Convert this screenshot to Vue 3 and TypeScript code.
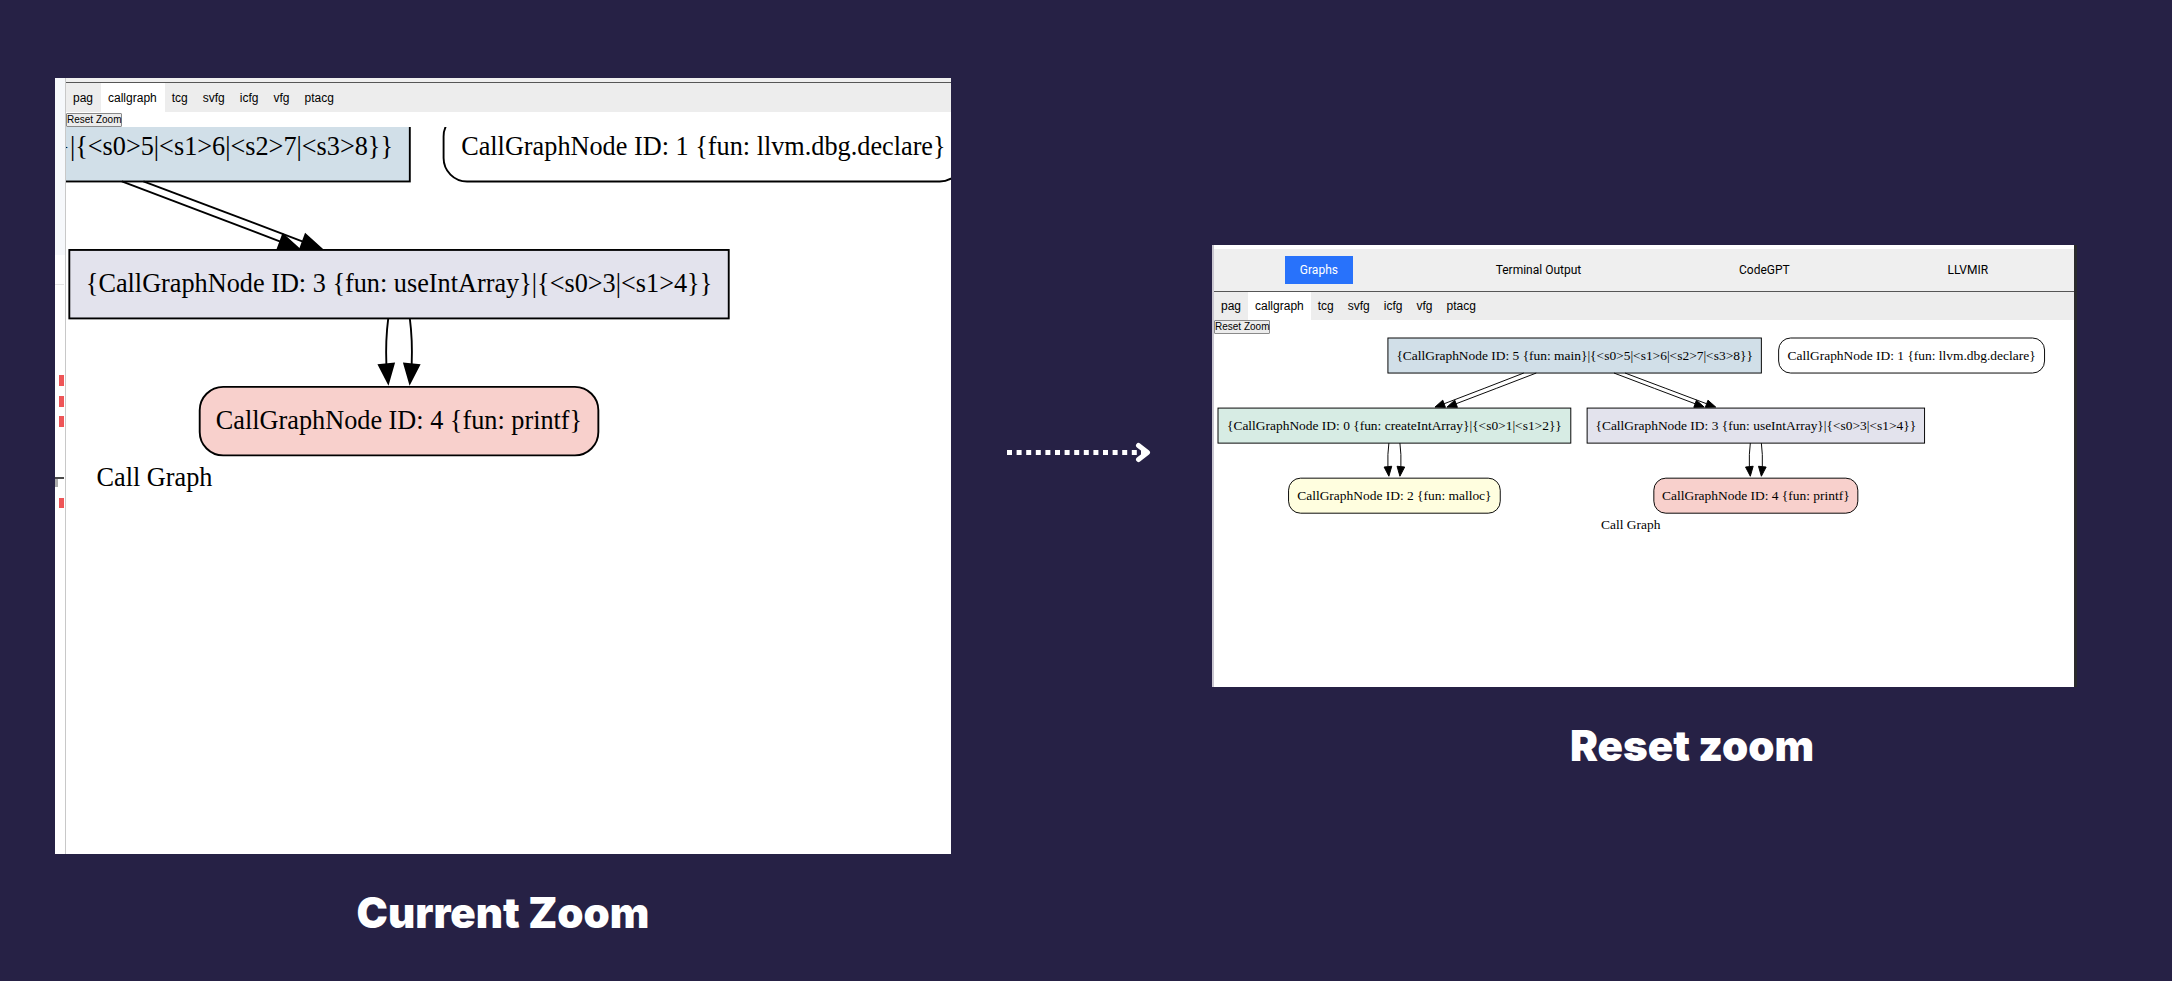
<script setup lang="ts">
import { ref } from 'vue'

type Point = [number, number]

interface GraphNode {
  label: string
  x: number
  y: number
  width: number
  fill: string
  rounded?: boolean
}

interface Edge {
  from: Point
  bend: Point
  neck: Point
  tip: Point
}

interface Pane {
  id: string
  caption: string
  nav: string[]
  gutter: boolean
  x: number
  y: number
  zoom: number
}

const NODE_HEIGHT = 73

const nodes: GraphNode[] = [
  { label: '{CallGraphNode ID: 5 {fun: main}|{<s0>5|<s1>6|<s2>7|<s3>8}}', x: 354, y: 0, width: 778, fill: '#d1dfe8' },
  { label: 'CallGraphNode ID: 1 {fun: llvm.dbg.declare}', x: 1168, y: 0, width: 554, fill: '#ffffff', rounded: true },
  { label: '{CallGraphNode ID: 0 {fun: createIntArray}|{<s0>1|<s1>2}}', x: 0, y: 146, width: 735, fill: '#d7ece4' },
  { label: '{CallGraphNode ID: 3 {fun: useIntArray}|{<s0>3|<s1>4}}', x: 769, y: 146, width: 703, fill: '#e3e3ed' },
  { label: 'CallGraphNode ID: 2 {fun: malloc}', x: 147, y: 292, width: 441, fill: '#fffedf', rounded: true },
  { label: 'CallGraphNode ID: 4 {fun: printf}', x: 908, y: 292, width: 425, fill: '#f8d0cc', rounded: true },
]

const edges: Edge[] = [
  { from: [637, 73], bend: [555, 105], neck: [471, 137], tip: [452, 144] },
  { from: [663, 73], bend: [580, 105], neck: [496, 137], tip: [477, 144] },
  { from: [825, 73], bend: [909, 105], neck: [994, 137], tip: [1013, 144] },
  { from: [848, 73], bend: [933, 105], neck: [1018, 137], tip: [1037, 144] },
  { from: [356, 219], bend: [353, 242], neck: [354, 268], tip: [356, 288] },
  { from: [379, 219], bend: [382, 242], neck: [381, 268], tip: [379, 288] },
  { from: [1109, 219], bend: [1106, 242], neck: [1107, 268], tip: [1109, 288] },
  { from: [1132, 219], bend: [1135, 242], neck: [1134, 268], tip: [1132, 288] },
]

const panes: Pane[] = [
  { id: 'current', caption: 'Current Zoom', nav: [], gutter: true, x: -718, y: -14, zoom: 0.938 },
  {
    id: 'reset',
    caption: 'Reset zoom',
    nav: ['Graphs', 'Terminal Output', 'CodeGPT', 'LLVMIR'],
    gutter: false,
    x: 4,
    y: 4,
    zoom: 0.48,
  },
]

const tabs = ['pag', 'callgraph', 'tcg', 'svfg', 'icfg', 'vfg', 'ptacg']
const activeTab = ref('callgraph')
const activeNav = ref('Graphs')
const dashes = Array.from({ length: 14 }, (_, i) => i)

// Nodes panned past the left edge of a pane are not drawn.
function visibleNodes(pane: Pane): GraphNode[] {
  return nodes.filter((node) => pane.x + (node.x + node.width) * pane.zoom > 0)
}

function edgePath(edge: Edge): string {
  return `M${edge.from} Q${edge.bend} ${edge.neck}`
}

// Triangle 16 units wide at the neck, pointing at the tip.
function arrowHead(edge: Edge): string {
  const dx = edge.tip[0] - edge.neck[0]
  const dy = edge.tip[1] - edge.neck[1]
  const length = Math.hypot(dx, dy)
  const nx = (-dy / length) * 8
  const ny = (dx / length) * 8
  const [x, y] = edge.neck
  return `${x + nx},${y + ny} ${edge.tip} ${x - nx},${y - ny}`
}
</script>

<template>
  <main class="board">
    <template v-for="(pane, index) in panes" :key="pane.id">
      <svg v-if="index > 0" class="arrow" width="146" height="22" viewBox="0 0 146 22" aria-hidden="true">
        <rect v-for="i in dashes" :key="i" :x="1 + i * 9.6" y="8" width="5" height="5" fill="#fff" />
        <path d="M132.500 3.500L141.500 10.500L132.500 17.500" fill="none" stroke="#fff" stroke-width="5" stroke-linecap="round" stroke-linejoin="round" />
        <path d="M135 6.500L141 10.500L135 14.500Z" fill="#fff" />
      </svg>
      <figure class="pane" :class="pane.id">
        <div class="window">
          <svg v-if="pane.gutter" class="gutter" width="10" aria-hidden="true">
            <rect width="10" height="177" fill="#f6f8fb" />
            <rect y="206" width="9" height="1" fill="#e4e4e4" />
            <rect x="4" y="297" width="5" height="11" fill="#ee5557" />
            <rect x="4" y="318" width="5" height="11" fill="#ee5557" />
            <rect x="4" y="338" width="5" height="11" fill="#ee5557" />
            <rect y="400" width="3" height="9" fill="#adadad" />
            <rect y="399" width="9" height="2" fill="#4a4a4a" />
            <rect x="4" y="420" width="5" height="10" fill="#ee5557" />
          </svg>
          <div class="content">
            <nav class="topbar">
              <button
                v-for="item in pane.nav"
                :key="item"
                type="button"
                class="nav-item"
                :class="{ active: item === activeNav }"
                @click="activeNav = item"
              >{{ item }}</button>
            </nav>
            <div class="tabs">
              <button
                v-for="tab in tabs"
                :key="tab"
                type="button"
                class="tab"
                :class="{ active: tab === activeTab }"
                @click="activeTab = tab"
              >{{ tab }}</button>
            </div>
            <button type="button" class="reset-button">Reset Zoom</button>
            <svg class="graph" role="img" aria-label="Call Graph">
              <g :transform="`translate(${pane.x} ${pane.y}) scale(${pane.zoom})`">
                <g v-for="node in visibleNodes(pane)" :key="node.label">
                  <rect
                    class="node"
                    :x="node.x"
                    :y="node.y"
                    :width="node.width"
                    :height="NODE_HEIGHT"
                    :rx="node.rounded ? 25 : 0"
                    :fill="node.fill"
                  />
                  <text :x="node.x + node.width / 2" :y="node.y + 45" text-anchor="middle">{{ node.label }}</text>
                </g>
                <g v-for="(edge, i) in edges" :key="i">
                  <path class="edge" :d="edgePath(edge)" />
                  <polygon class="head" :points="arrowHead(edge)" />
                </g>
                <text x="798" y="398">Call Graph</text>
              </g>
            </svg>
          </div>
        </div>
        <figcaption class="caption">{{ pane.caption }}</figcaption>
      </figure>
    </template>
  </main>
</template>

<style scoped>
.board {
  box-sizing: border-box;
  min-height: 100vh;
  padding: 78px 95px 32px 55px;
  display: grid;
  grid-template-columns: 896fr 261fr 865fr;
  align-items: start;
  background: #262145;
  font-family: "Liberation Sans", Arial, sans-serif;
}

.pane {
  margin: 0;
  min-width: 0;
}

.pane.reset {
  padding-top: 167px;
}

.window {
  display: flex;
  background: #fff;
}

.reset .window {
  padding-top: 4px;
  border-left: 2px solid #c9c6d0;
  border-right: 3px solid #2a2a2c;
}

.gutter {
  flex: none;
  height: auto;
}

.content {
  flex: 1;
  min-width: 0;
  display: flex;
  flex-direction: column;
  align-items: stretch;
}

.current .content {
  border-left: 1px solid #c8c8c8;
}

.topbar {
  display: flex;
  justify-content: space-around;
  align-items: center;
  min-height: 4px;
  padding: 0 7px;
  background: #efefef;
  border-bottom: 1px solid #565656;
}

.reset .topbar {
  min-height: 42px;
}

button {
  margin: 0;
  border: 0;
  border-radius: 0;
  background: none;
  color: #000;
  font-family: inherit;
  cursor: pointer;
}

.nav-item {
  height: 28px;
  padding: 0 15px;
  font: 12px/28px Roboto, Inter, sans-serif;
}

.nav-item.active {
  background: #2872fb;
  color: #fff;
}

.tabs {
  display: flex;
  background: #ededed;
}

.tab {
  height: 28px;
  padding: 0 7px;
  font-size: 12px;
  line-height: 26px;
}

.current .tab {
  height: 29px;
  padding: 0 8px 0 7px;
}

.tab.active {
  background: #fff;
}

.reset-button {
  align-self: flex-start;
  box-sizing: border-box;
  height: 14px;
  padding: 0;
  border: 1px solid #8a8a8a;
  border-radius: 1px;
  background: #ececec;
  font-size: 10px;
  line-height: 12px;
}

.current .reset-button {
  margin-top: 1px;
}

.graph {
  display: block;
  width: 100%;
  height: 353px;
  overflow: hidden;
  font: 28px "Liberation Serif", "Times New Roman", serif;
}

.current .graph {
  height: 727px;
}

.node {
  stroke: #000;
  stroke-width: 2;
}

.edge {
  fill: none;
  stroke: #000;
  stroke-width: 2;
}

.head {
  fill: #000;
  stroke: #000;
  stroke-width: 2;
}

.arrow {
  justify-self: center;
  margin-top: 364px;
  margin-right: 6px;
}

.caption {
  margin-top: 35px;
  color: #fff;
  font: 900 42px/48px Inter, sans-serif;
  text-align: center;
}

.reset .caption {
  padding-left: 11%;
}
</style>

<style>
body {
  margin: 0;
  background: #262145;
}
</style>
